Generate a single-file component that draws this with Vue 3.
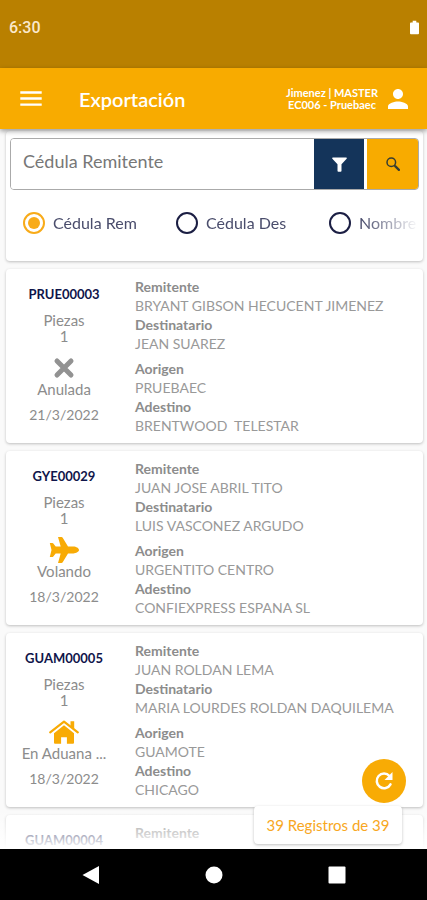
<script setup>
import { ref } from 'vue'

const query = ref('')
const field = ref('rem')
const fields = [
  { id: 'rem', label: 'Cédula Rem' },
  { id: 'des', label: 'Cédula Des' },
  { id: 'nom', label: 'Nombre' }
]

const shipments = [
  { code: 'PRUE00003', pieces: 1, icon: 'cancel', status: 'Anulada', date: '21/3/2022', sender: 'BRYANT GIBSON HECUCENT JIMENEZ', receiver: 'JEAN SUAREZ', origin: 'PRUEBAEC', target: 'BRENTWOOD  TELESTAR' },
  { code: 'GYE00029', pieces: 1, icon: 'plane', status: 'Volando', date: '18/3/2022', sender: 'JUAN JOSE ABRIL TITO', receiver: 'LUIS VASCONEZ ARGUDO', origin: 'URGENTITO CENTRO', target: 'CONFIEXPRESS ESPANA SL' },
  { code: 'GUAM00005', pieces: 1, icon: 'home', status: 'En Aduana ...', date: '18/3/2022', sender: 'JUAN ROLDAN LEMA', receiver: 'MARIA LOURDES ROLDAN DAQUILEMA', origin: 'GUAMOTE', target: 'CHICAGO' },
  { code: 'GUAM00004' }
]
</script>

<template>
  <div class="screen">
    <div class="status-bar">
      <span class="clock">6:30</span>
      <svg class="battery" viewBox="0 0 10 15" aria-hidden="true">
        <path d="M3 0h4v2h2q1 0 1 1v11q0 1-1 1H1q-1 0-1-1V3q0-1 1-1h2z" fill="#fff" />
      </svg>
    </div>

    <header class="app-bar">
      <button class="icon-button" type="button" aria-label="Menú">
        <svg class="menu-icon" viewBox="0 0 20 14"><path d="M0 1.3h20M0 7h20M0 12.7h20" stroke="#fff" stroke-width="2.3" /></svg>
      </button>
      <h1>Exportación</h1>
      <div class="account">Jimenez | MASTER<br>EC006 - Pruebaec</div>
      <button class="icon-button" type="button" aria-label="Cuenta">
        <svg class="person-icon" viewBox="4 4 16 16"><path d="M12 12c2.21 0 4-1.79 4-4s-1.79-4-4-4-4 1.79-4 4 1.79 4 4 4zm0 2c-2.67 0-8 1.34-8 4v2h16v-2c0-2.66-5.330-4-8-4z" fill="#fff" /></svg>
      </button>
    </header>

    <main class="content">
      <form class="card search" @submit.prevent>
        <div class="search-box">
          <input v-model="query" class="search-input" type="text" placeholder="Cédula Remitente" aria-label="Cédula Remitente">
          <button class="filter-button" type="button" aria-label="Filtrar">
            <svg class="filter-icon" viewBox="0 0 15 15"><path d="M.8.5h13.400q.8 0 .6.8-.1.4-.4.700L9.500 7.200v6.600q0 .9-.9.900H6.400q-.9 0-.9-.9V7.200L.6 2Q-.5.500.8.500z" fill="#fff" /></svg>
          </button>
          <button class="search-button" type="submit" aria-label="Buscar">
            <svg class="search-icon" viewBox="0 0 14 14"><g fill="none" stroke="#363d32"><circle cx="5.300" cy="5.300" r="4.300" stroke-width="1.500" /><path d="M8.400 8.400l.8.800" stroke-width="1.500" /><path d="M9.400 9.400l3.500 3.500" stroke-width="2.200" stroke-linecap="round" /></g></svg>
          </button>
        </div>
        <div class="options">
          <label v-for="f in fields" :key="f.id" class="option">
            <input v-model="field" type="radio" name="field" :value="f.id">
            <span>{{ f.label }}</span>
          </label>
        </div>
      </form>

      <article v-for="s in shipments" :key="s.code" class="card shipment">
        <div class="summary">
          <strong class="code">{{ s.code }}</strong>
          <template v-if="s.status">
            <div class="pieces">Piezas<br>{{ s.pieces }}</div>
            <div class="state">
              <svg v-if="s.icon === 'cancel'" class="state-icon" viewBox="0 0 30 26"><path d="M8 6l14 14M22 6L8 20" stroke="#929292" stroke-width="5" stroke-linecap="round" /></svg>
              <svg v-else-if="s.icon === 'plane'" class="state-icon" viewBox="0 0 30 26"><path d="M9 0h3.500q.8 0 1.200.8L19 9.600h5.500C27 9.600 30 11.300 30 13s-3 3.400-5.500 3.400H19l-5.300 8.800q-.4.800-1.200.8H9l2.700-9.600H6.700l-2.600 3.300q-.4.400-.9.400H.8L2.500 13 .8 5.900h2.400q.5 0 .9.400l2.600 3.300h5z" fill="#f8ab05" /></svg>
              <svg v-else class="state-icon" viewBox="0 -1 30 26"><path d="M1.200 12.300L15 1.600l13.800 10.700" fill="none" stroke="#f8ab05" stroke-width="2.200" stroke-linecap="round" stroke-linejoin="round" /><path d="M21.500 1.200h3.700v8.300l-3.700-3zM15 5.200l10 8v9.600q0 1-1 1h-6.100v-6.600h-5.800v6.600H6q-1 0-1-1v-9.600z" fill="#f8ab05" /></svg>
              <div class="state-name">{{ s.status }}</div>
            </div>
            <time>{{ s.date }}</time>
          </template>
        </div>
        <div class="details">
          <dl>
            <dt>Remitente</dt><dd>{{ s.sender }}</dd>
            <template v-if="s.receiver"><dt>Destinatario</dt><dd>{{ s.receiver }}</dd></template>
          </dl>
          <dl v-if="s.origin">
            <dt>Aorigen</dt><dd>{{ s.origin }}</dd>
            <dt>Adestino</dt><dd>{{ s.target }}</dd>
          </dl>
        </div>
      </article>

      <div class="fade"></div>
      <button class="reload" type="button" aria-label="Recargar">
        <svg class="reload-icon" viewBox="0 0 20 20"><path d="M15.500 5A7.300 7.300 0 1 0 16.500 13.300" fill="none" stroke="#fff" stroke-width="2.500" stroke-linecap="round" /><path d="M18.500 1v8h-8z" fill="#fff" /></svg>
      </button>
      <div class="counter">39 Registros de 39</div>
    </main>

    <nav class="system-nav">
      <button type="button" aria-label="Atrás"><svg viewBox="0 0 18 18"><path d="M17 0v18L.5 9z" fill="#fff" /></svg></button>
      <button type="button" aria-label="Inicio"><svg viewBox="0 0 18 18"><circle cx="9" cy="9" r="8.500" fill="#fff" /></svg></button>
      <button type="button" aria-label="Recientes"><svg viewBox="0 0 18 18"><rect x=".5" y=".5" width="17" height="17" rx="1" fill="#fff" /></svg></button>
    </nav>
  </div>
</template>

<style>
body {
  background: #fafafa;
}
</style>

<style scoped>
* {
  box-sizing: border-box;
}

.screen {
  display: flex;
  flex-direction: column;
  height: 100vh;
  font-family: Lato, "Liberation Sans", sans-serif;
  color: #8c8c8c;
  background: #fafafa;
}

button {
  display: flex;
  align-items: center;
  justify-content: center;
  padding: 0;
  border: 0;
  background: none;
}

.status-bar {
  display: flex;
  flex: none;
  justify-content: space-between;
  height: 68px;
  padding: 20px 8px 0 9px;
  background: #b98000;
}

.clock {
  font: 500 16px/16px Roboto, sans-serif;
  color: #fbe9cb;
}

.battery {
  width: 9px;
  height: 15px;
}

.app-bar {
  z-index: 1;
  display: flex;
  flex: none;
  align-items: center;
  height: 61px;
  padding: 0 19px 0 20px;
  color: #fff;
  background: #f8ab00;
  box-shadow: 0 2px 5px rgba(0, 0, 0, .4);
}

.menu-icon {
  width: 22px;
  height: 15px;
}

h1 {
  flex: 1;
  margin: 0 0 0 37px;
  font-size: 20px;
  font-weight: 600;
  line-height: 24px;
}

.account {
  margin-right: 10px;
  font-size: 11px;
  font-weight: 700;
  line-height: 12px;
  text-align: center;
}

.person-icon {
  width: 20px;
  height: 20px;
}

.content {
  position: relative;
  display: flex;
  flex: 1;
  flex-direction: column;
  gap: 8px;
  min-height: 0;
  padding: 2px 4px 0 6px;
  overflow: hidden;
}

.card {
  flex: none;
  border-radius: 4px;
  background: #fff;
  box-shadow: 0 1px 3px rgba(0, 0, 0, .24);
}

.search {
  height: 130px;
  padding: 7px 4px 0;
}

.search-box {
  display: flex;
  height: 52px;
  overflow: hidden;
  border: 1px solid #aaa;
  border-radius: 4px;
}

.search-input {
  flex: 1;
  min-width: 0;
  padding: 0 12px 6px;
  border: 0;
  outline: 0;
  font: 18px/24px Lato, sans-serif;
  color: #777;
  background: #fff;
}

.search-input::placeholder {
  color: #777;
  opacity: 1;
}

.filter-button {
  width: 50px;
  background: #14345a;
}

.search-button {
  width: 51px;
  margin-left: 3px;
  background: #f8ab00;
}

.filter-icon {
  width: 15px;
  height: 15px;
}

.search-icon {
  width: 14px;
  height: 14px;
}

.options {
  display: flex;
  height: 66px;
  padding-left: 13px;
  overflow: hidden;
  mask-image: linear-gradient(to right, #000 86%, transparent);
}

.option {
  display: flex;
  flex: 0 0 153px;
  align-items: center;
  gap: 8px;
  font-size: 16px;
  line-height: 20px;
  white-space: nowrap;
  color: #4a4d6c;
}

.option:last-child {
  flex: none;
}

.option input {
  display: grid;
  place-items: center;
  width: 22px;
  height: 22px;
  margin: 0;
  border: 2px solid #1b1e43;
  border-radius: 50%;
  appearance: none;
}

.option input:checked {
  border-color: #f8ab19;
}

.option input:checked::before {
  width: 12px;
  height: 12px;
  border-radius: 50%;
  background: #f8ab19;
  content: "";
}

.shipment {
  display: flex;
  gap: 13px;
  height: 174px;
}

.summary {
  display: flex;
  flex: none;
  flex-direction: column;
  gap: 10px;
  width: 116px;
  padding-top: 17px;
  font-size: 14px;
  line-height: 16px;
  text-align: center;
}

.code {
  font-size: 13px;
  color: #10154a;
}

.pieces,
.state-name {
  font-size: 15px;
}

.state {
  padding-top: 1px;
}

.state-icon {
  display: block;
  width: 30px;
  height: 26px;
  margin: 0 auto;
}

.details {
  display: flex;
  flex: 1;
  flex-direction: column;
  gap: 6px;
  min-width: 0;
  padding-top: 8px;
  font-size: 14px;
  line-height: 19px;
}

dl,
dd {
  margin: 0;
}

dt {
  font-weight: 700;
}

dd {
  white-space: pre;
  color: #999;
}

.fade {
  position: absolute;
  right: 0;
  bottom: 0;
  left: 0;
  height: 40px;
  background: linear-gradient(rgba(255, 255, 255, 0), #fff);
}

.reload {
  position: absolute;
  right: 21px;
  bottom: 46px;
  width: 44px;
  height: 44px;
  border-radius: 50%;
  background: #f8ab05;
}

.reload-icon {
  width: 20px;
  height: 20px;
}

.counter {
  position: absolute;
  right: 25px;
  bottom: 5px;
  width: 148px;
  padding: 9px 0;
  border-radius: 4px;
  font-size: 15px;
  line-height: 20px;
  text-align: center;
  color: #f8a722;
  background: #fff;
  box-shadow: 0 1px 3px rgba(0, 0, 0, .25);
}

.system-nav {
  display: flex;
  flex: none;
  align-items: center;
  justify-content: center;
  gap: 105px;
  height: 51px;
  background: #000;
}

.system-nav svg {
  display: block;
  width: 18px;
  height: 18px;
}
</style>
